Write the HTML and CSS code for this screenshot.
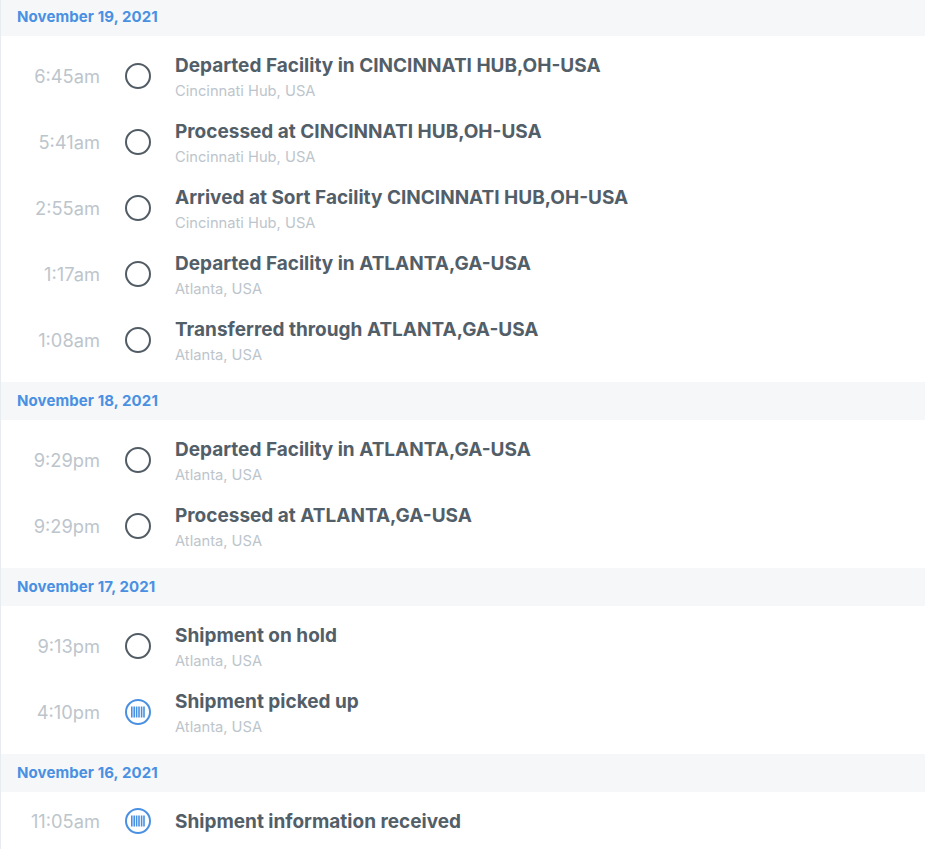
FILE: index.html
```html
<!DOCTYPE html>
<html lang="en">
<head>
    <meta charset="UTF-8">
    <title>Shipment History</title>
    <link rel="stylesheet" href="styles.css">
</head>
<body>

<svg class="icon-defs" width="0" height="0">
    <symbol id="ring" viewBox="0 0 26 26">
        <circle cx="13" cy="13" r="12" fill="none" stroke="#525c65" stroke-width="2"/>
    </symbol>
    <symbol id="barcode" viewBox="0 0 26 26">
        <circle cx="13" cy="13" r="12" fill="none" stroke="#4a90e2" stroke-width="2"/>
        <path d="M6.8 7.5v11M9.2 7.5v11M11.6 7.5v11M14 7.5v11M16.6 7.5v11M19 7.5v11" stroke="#4a90e2" stroke-width="1.6" fill="none"/>
    </symbol>
</svg>

<div class="history">
    <div class="date-head">November 19, 2021</div>
    <ul class="events">
        <li class="event">
            <div class="time">6:45am</div>
            <svg class="marker"><use href="#ring"/></svg>
            <div class="info">
                <div class="title">Departed Facility in CINCINNATI HUB,OH-USA</div>
                <div class="place">Cincinnati Hub, USA</div>
            </div>
        </li>
        <li class="event">
            <div class="time">5:41am</div>
            <svg class="marker"><use href="#ring"/></svg>
            <div class="info">
                <div class="title">Processed at CINCINNATI HUB,OH-USA</div>
                <div class="place">Cincinnati Hub, USA</div>
            </div>
        </li>
        <li class="event">
            <div class="time">2:55am</div>
            <svg class="marker"><use href="#ring"/></svg>
            <div class="info">
                <div class="title">Arrived at Sort Facility CINCINNATI HUB,OH-USA</div>
                <div class="place">Cincinnati Hub, USA</div>
            </div>
        </li>
        <li class="event">
            <div class="time">1:17am</div>
            <svg class="marker"><use href="#ring"/></svg>
            <div class="info">
                <div class="title">Departed Facility in ATLANTA,GA-USA</div>
                <div class="place">Atlanta, USA</div>
            </div>
        </li>
        <li class="event">
            <div class="time">1:08am</div>
            <svg class="marker"><use href="#ring"/></svg>
            <div class="info">
                <div class="title">Transferred through ATLANTA,GA-USA</div>
                <div class="place">Atlanta, USA</div>
            </div>
        </li>
    </ul>

    <div class="date-head">November 18, 2021</div>
    <ul class="events">
        <li class="event">
            <div class="time">9:29pm</div>
            <svg class="marker"><use href="#ring"/></svg>
            <div class="info">
                <div class="title">Departed Facility in ATLANTA,GA-USA</div>
                <div class="place">Atlanta, USA</div>
            </div>
        </li>
        <li class="event">
            <div class="time">9:29pm</div>
            <svg class="marker"><use href="#ring"/></svg>
            <div class="info">
                <div class="title">Processed at ATLANTA,GA-USA</div>
                <div class="place">Atlanta, USA</div>
            </div>
        </li>
    </ul>

    <div class="date-head">November 17, 2021</div>
    <ul class="events">
        <li class="event">
            <div class="time">9:13pm</div>
            <svg class="marker"><use href="#ring"/></svg>
            <div class="info">
                <div class="title">Shipment on hold</div>
                <div class="place">Atlanta, USA</div>
            </div>
        </li>
        <li class="event">
            <div class="time">4:10pm</div>
            <svg class="marker"><use href="#barcode"/></svg>
            <div class="info">
                <div class="title">Shipment picked up</div>
                <div class="place">Atlanta, USA</div>
            </div>
        </li>
    </ul>

    <div class="date-head">November 16, 2021</div>
    <ul class="events">
        <li class="event event-single">
            <div class="time">11:05am</div>
            <svg class="marker"><use href="#barcode"/></svg>
            <div class="info">
                <div class="title">Shipment information received</div>
            </div>
        </li>
    </ul>
</div>

</body>
</html>
```

FILE: styles.css
```css
html, body {
    margin: 0;
    padding: 0;
    height: 100%;
    overflow: hidden;
}
body {
    font-family: Inter, Roboto, sans-serif;
    background-color: #fff;
}
.icon-defs {
    display: block;
    height: 0;
}
.history {
    margin-top: -2px;
    border-left: 1px solid #e8ecf0;
}
.date-head {
    height: 38px;
    line-height: 38px;
    padding-left: 16px;
    background-color: #f5f7f9;
    color: #4a90e2;
    font-size: 15px;
    font-weight: 700;
    letter-spacing: 0.1px;
}
.events {
    list-style: none;
    margin: 0;
    padding: 0 0 16px;
}
.event {
    display: flex;
    align-items: center;
    height: 66px;
    padding-top: 14px;
    box-sizing: border-box;
}
.event-single {
    height: 58px;
    padding-top: 0;
}
.time {
    width: 99px;
    text-align: right;
    color: #bdc5cc;
    font-size: 18.3px;
}
.marker {
    width: 26px;
    height: 26px;
    margin-left: 25px;
    flex-shrink: 0;
}
.info {
    margin-left: 24px;
    padding-top: 3px;
}
.event-single .info {
    padding-top: 1px;
}
.title {
    color: #525e68;
    font-size: 19px;
    font-weight: 700;
    line-height: 24px;
}
.place {
    color: #bdc5cc;
    font-size: 14.7px;
    line-height: 20px;
    margin-top: 3px;
}
```
